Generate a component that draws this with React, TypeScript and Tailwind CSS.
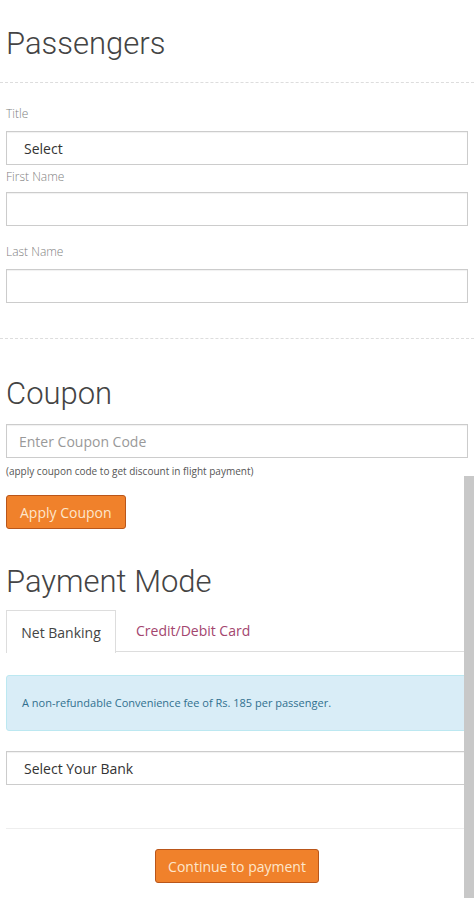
const Label = ({text, className}: {text: string; className: string}) => (
    <label className={"block text-[12px] leading-[17px] font-light text-[#7f7f7f] " + className}>{text}</label>
);

const Box = ({children}: {children?: React.ReactNode}) => (
    <div className="h-[34px] border border-[#cccccc] bg-white shadow-[inset_0_1px_1px_rgba(0,0,0,0.06)] flex items-center text-[14px] text-[#333]">
        {children}
    </div>
);

const App = () => {
    return (
        <div className="relative min-h-[898px] bg-white font-['Open_Sans',sans-serif] overflow-hidden">
            <div className="pl-[6px] pr-[6px]">
                {/* Passengers */}
                <h2 className="pt-[26px] text-[31px] leading-[36px] font-light text-[#444] font-['Roboto',sans-serif]">Passengers</h2>
                <div className="-mx-[6px] mt-[20px] border-t border-dashed border-[#dddddd]"></div>

                <Label text="Title" className="mt-[22px] mb-[9px]" />
                <Box>
                    <span className="pl-[17px]">Select</span>
                </Box>
                <Label text="First Name" className="mt-[3px] mb-[7px]" />
                <Box />
                <Label text="Last Name" className="mt-[17px] mb-[9px]" />
                <Box />

                <div className="-mx-[6px] mt-[35px] border-t border-dashed border-[#dddddd]"></div>

                {/* Coupon */}
                <h2 className="mt-[37px] text-[31px] leading-[36px] font-light text-[#444] font-['Roboto',sans-serif]">Coupon</h2>
                <div className="mt-[12px]">
                    <Box>
                        <span className="pl-[12px] text-[#999]">Enter Coupon Code</span>
                    </Box>
                </div>
                <p className="mt-[6px] text-[10px] leading-[14px] text-[#555]">(apply coupon code to get discount in flight payment)</p>
                <button className="mt-[17px] h-[34px] px-[13px] rounded-[3px] bg-[#f0812b] border border-[#b9561a] text-[14px] text-[#fde6cc]">
                    Apply Coupon
                </button>

                {/* Payment mode */}
                <h2 className="mt-[35px] text-[31px] leading-[36px] font-light text-[#444] font-['Roboto',sans-serif]">Payment Mode</h2>
                <div className="mt-[10px] flex border-b border-[#dddddd] h-[42px]">
                    <div className="w-[110px] h-[43px] border border-b-0 border-[#dddddd] bg-white flex items-center justify-center text-[14px] text-[#444]">
                        Net Banking
                    </div>
                    <div className="pl-[20px] flex items-center text-[14px] text-[#a3456e]">Credit/Debit Card</div>
                </div>

                <div className="mt-[23px] h-[56px] bg-[#d9edf7] border border-[#bce8f1] rounded-[3px] flex items-center pl-[15px] text-[11px] text-[#31708f]">
                    A non-refundable Convenience fee of Rs. 185 per passenger.
                </div>

                <div className="mt-[20px]">
                    <Box>
                        <span className="pl-[17px]">Select Your Bank</span>
                    </Box>
                </div>

                <div className="mt-[43px] border-t border-[#eeeeee]"></div>

                <div className="mt-[20px] flex justify-center">
                    <button className="h-[34px] px-[12px] rounded-[3px] bg-[#f0812b] border border-[#b9561a] text-[14px] text-[#fde6cc]">
                        Continue to payment
                    </button>
                </div>
            </div>

            {/* scrollbar */}
            <div className="absolute right-0 top-[476px] bottom-0 w-[10px] bg-[#c8c8c8]"></div>
        </div>
    );
};

export default App;
